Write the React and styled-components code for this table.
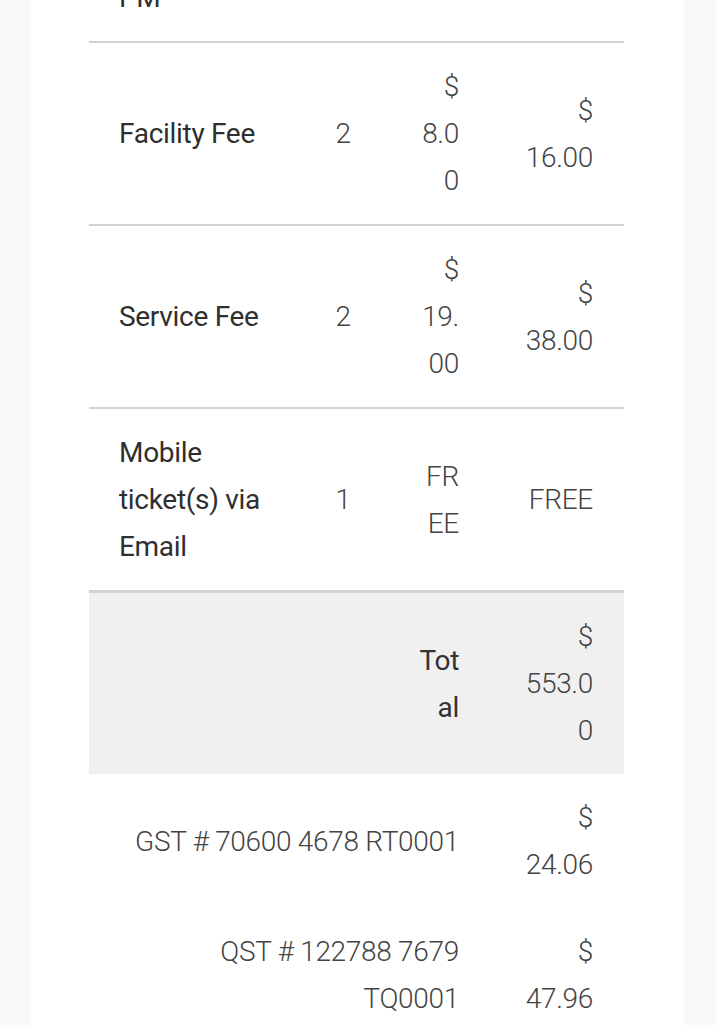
import React from 'react';
import styled, { createGlobalStyle } from 'styled-components'

const GlobalStyle = createGlobalStyle`
  html, body {
    margin: 0;
    padding: 0;
    background: #f9f9fc;
    font-family: Roboto, "Noto Sans", sans-serif;
    overflow: hidden;
  }
`

const Page = styled.div`
  height: 1025px;
  overflow: hidden;
`

const Card = styled.div`
  margin: -46px 32px 0 31px;
  padding: 0 60px 0 58px;
  background: #fff;
`

const Table = styled.table`
  width: 535px;
  border-collapse: collapse;
  table-layout: fixed;
  font-size: 28px;
  line-height: 47px;
  letter-spacing: -0.3px;
`

const Row = styled.tr`
  border-bottom: ${p => p.$plain ? 'none' : '2px solid #d2d2d2'};
  background: ${p => p.$total ? '#f0f0f0' : 'transparent'};
  ${p => p.$total && 'border-top: 3px solid #d2d2d2;'}
`

const Label = styled.td`
  padding: 20px 10px 20px 30px;
  color: #2f2f2f;
  font-weight: 400;
  text-align: left;
  vertical-align: middle;
  overflow-wrap: anywhere;
`

const Qty = styled.td`
  padding: 20px 0;
  color: #444;
  font-weight: 300;
  text-align: center;
  vertical-align: middle;
`

const Amount = styled.td`
  padding: 20px 31px 20px 27px;
  color: ${p => p.$strong ? '#333' : '#444'};
  font-weight: ${p => p.$strong ? 400 : 300};
  text-align: right;
  vertical-align: middle;
  overflow-wrap: anywhere;
`

const TaxLabel = styled.td`
  padding: 20px 31px 20px 38px;
  color: #444;
  font-weight: 300;
  text-align: right;
  vertical-align: middle;
`

const items = [
  { label: 'Facility Fee', qty: '2', unit: '$ 8.00', total: '$ 16.00' },
  { label: 'Service Fee', qty: '2', unit: '$ 19.00', total: '$ 38.00' },
  { label: 'Mobile ticket(s) via Email', qty: '1', unit: 'FREE', total: 'FREE' },
]

const taxes = [
  { label: 'GST # 70600 4678 RT0001', amount: '$ 24.06' },
  { label: 'QST # 122788 7679 TQ0001', amount: '$ 47.96' },
]

function App() {
  return (
    <Page>
      <GlobalStyle />
      <Card>
        <Table>
          <colgroup>
            <col style={{ width: 209 }} />
            <col style={{ width: 90 }} />
            <col style={{ width: 102 }} />
            <col style={{ width: 134 }} />
          </colgroup>
          <tbody>
            <Row>
              <Label>PM</Label>
              <Qty />
              <Amount />
              <Amount />
            </Row>
            {items.map(item => (
              <Row key={item.label}>
                <Label>{item.label}</Label>
                <Qty>{item.qty}</Qty>
                <Amount>{item.unit}</Amount>
                <Amount>{item.total}</Amount>
              </Row>
            ))}
            <Row $total $plain>
              <Label />
              <Qty />
              <Amount $strong>Total</Amount>
              <Amount>$ 553.00</Amount>
            </Row>
            {taxes.map(tax => (
              <Row key={tax.label} $plain>
                <TaxLabel colSpan={3}>{tax.label}</TaxLabel>
                <Amount>{tax.amount}</Amount>
              </Row>
            ))}
          </tbody>
        </Table>
      </Card>
    </Page>
  );
}

export default App;
